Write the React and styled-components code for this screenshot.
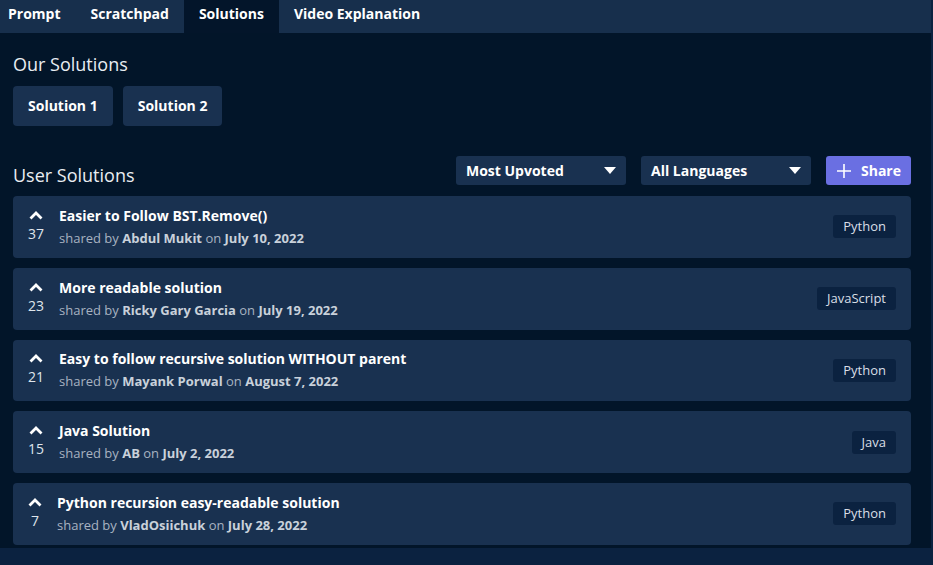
import React from "react";
import styled, { createGlobalStyle } from "styled-components";

const GlobalStyle = createGlobalStyle`
  html, body {
    margin: 0;
    padding: 0;
    background: #0b2240;
    font-family: "Open Sans", "Liberation Sans", sans-serif;
    color: #ffffff;
  }
`;

const Page = styled.div`
  width: 931px;
  height: 548px;
  background: #021529;
  overflow: hidden;
`;

const TabBar = styled.div`
  display: flex;
  height: 33px;
  background: #172f4c;
`;

const Tab = styled.div`
  padding: 4px 15px 0;
  padding-left: ${(p) => (p.first ? "8px" : "15px")};
  font-size: 14px;
  font-weight: 700;
  line-height: 19px;
  background: ${(p) => (p.active ? "#03152a" : "transparent")};
`;

const Content = styled.div`
  padding: 0 20px 0 13px;
`;

const Heading = styled.h2`
  margin: 0;
  font-size: 18px;
  font-weight: 400;
  line-height: 24px;
  color: #e9edf2;
`;

const OurHeading = styled(Heading)`
  padding-top: 19px;
`;

const ButtonRow = styled.div`
  display: flex;
  gap: 10px;
  margin-top: 10px;
`;

const SolutionButton = styled.button`
  height: 40px;
  padding: 0 15px 2px;
  border: none;
  border-radius: 4px;
  background: #193150;
  color: #ffffff;
  font-family: inherit;
  font-size: 14px;
  font-weight: 700;
`;

const UserHeader = styled.div`
  display: flex;
  align-items: flex-end;
  margin-top: 30px;
`;

const UserTitle = styled(Heading)`
  flex: 1;
  margin-bottom: -2px;
`;

const Controls = styled.div`
  display: flex;
  gap: 15px;
`;

const Select = styled.div`
  display: flex;
  align-items: center;
  justify-content: space-between;
  width: 170px;
  height: 29px;
  padding: 0 10px;
  box-sizing: border-box;
  border-radius: 3px;
  background: #193150;
  font-size: 14px;
  font-weight: 700;
`;

const Caret = styled.span`
  width: 0;
  height: 0;
  border-left: 6px solid transparent;
  border-right: 6px solid transparent;
  border-top: 7px solid #ffffff;
`;

const ShareButton = styled.button`
  display: flex;
  align-items: center;
  gap: 9px;
  height: 29px;
  padding: 0 10px 0 10px;
  border: none;
  border-radius: 3px;
  background: #6a6fe2;
  color: #ffffff;
  font-family: inherit;
  font-size: 14px;
  font-weight: 700;
`;

const List = styled.div`
  display: flex;
  flex-direction: column;
  gap: 10px;
  margin-top: 11px;
`;

const Card = styled.div`
  display: flex;
  align-items: center;
  height: 61.75px;
  padding: 0 15px;
  box-sizing: border-box;
  border-radius: 4px;
  background: #193150;
`;

const Votes = styled.div`
  display: flex;
  flex-direction: column;
  align-items: center;
  min-width: 14px;
  margin-right: 15px;
  font-size: 14px;
  color: #dfe5ec;
  line-height: 18px;
`;

const Chevron = styled.svg`
  display: block;
  margin-bottom: 5px;
`;

const Info = styled.div`
  flex: 1;
  display: flex;
  flex-direction: column;
  gap: 4px;
`;

const Title = styled.div`
  font-size: 14px;
  font-weight: 700;
  line-height: 18px;
  color: #ffffff;
`;

const Meta = styled.div`
  font-size: 13px;
  line-height: 18px;
  color: #a8b3c1;

  b {
    color: #c9d1db;
  }
`;

const Lang = styled.span`
  padding: 3px 10px;
  border-radius: 3px;
  background: #0b2240;
  font-size: 13px;
  line-height: 17px;
  color: #d9dfe7;
`;

const solutions = [
  { votes: 37, title: "Easier to Follow BST.Remove()", by: "Abdul Mukit", date: "July 10, 2022", lang: "Python" },
  { votes: 23, title: "More readable solution", by: "Ricky Gary Garcia", date: "July 19, 2022", lang: "JavaScript" },
  { votes: 21, title: "Easy to follow recursive solution WITHOUT parent", by: "Mayank Porwal", date: "August 7, 2022", lang: "Python" },
  { votes: 15, title: "Java Solution", by: "AB", date: "July 2, 2022", lang: "Java" },
  { votes: 7, title: "Python recursion easy-readable solution", by: "VladOsiichuk", date: "July 28, 2022", lang: "Python" },
];

function App() {
  return (
    <>
      <GlobalStyle />
      <Page>
        <TabBar>
          <Tab first>Prompt</Tab>
          <Tab>Scratchpad</Tab>
          <Tab active>Solutions</Tab>
          <Tab>Video Explanation</Tab>
        </TabBar>
        <Content>
          <OurHeading>Our Solutions</OurHeading>
          <ButtonRow>
            <SolutionButton>Solution 1</SolutionButton>
            <SolutionButton>Solution 2</SolutionButton>
          </ButtonRow>
          <UserHeader>
            <UserTitle>User Solutions</UserTitle>
            <Controls>
              <Select>
                Most Upvoted
                <Caret />
              </Select>
              <Select>
                All Languages
                <Caret />
              </Select>
              <ShareButton>
                <svg width="16" height="16" viewBox="0 0 16 16">
                  <path d="M8 1v14M1 8h14" stroke="#fff" strokeWidth="1.6" />
                </svg>
                Share
              </ShareButton>
            </Controls>
          </UserHeader>
          <List>
            {solutions.map((s) => (
              <Card key={s.title}>
                <Votes>
                  <Chevron width="14" height="9" viewBox="0 0 14 9">
                    <polyline
                      points="1.5,7.5 7,2 12.5,7.5"
                      fill="none"
                      stroke="#fff"
                      strokeWidth="2.8"
                    />
                  </Chevron>
                  {s.votes}
                </Votes>
                <Info>
                  <Title>{s.title}</Title>
                  <Meta>
                    shared by <b>{s.by}</b> on <b>{s.date}</b>
                  </Meta>
                </Info>
                <Lang>{s.lang}</Lang>
              </Card>
            ))}
          </List>
        </Content>
      </Page>
    </>
  );
}

export default App;
